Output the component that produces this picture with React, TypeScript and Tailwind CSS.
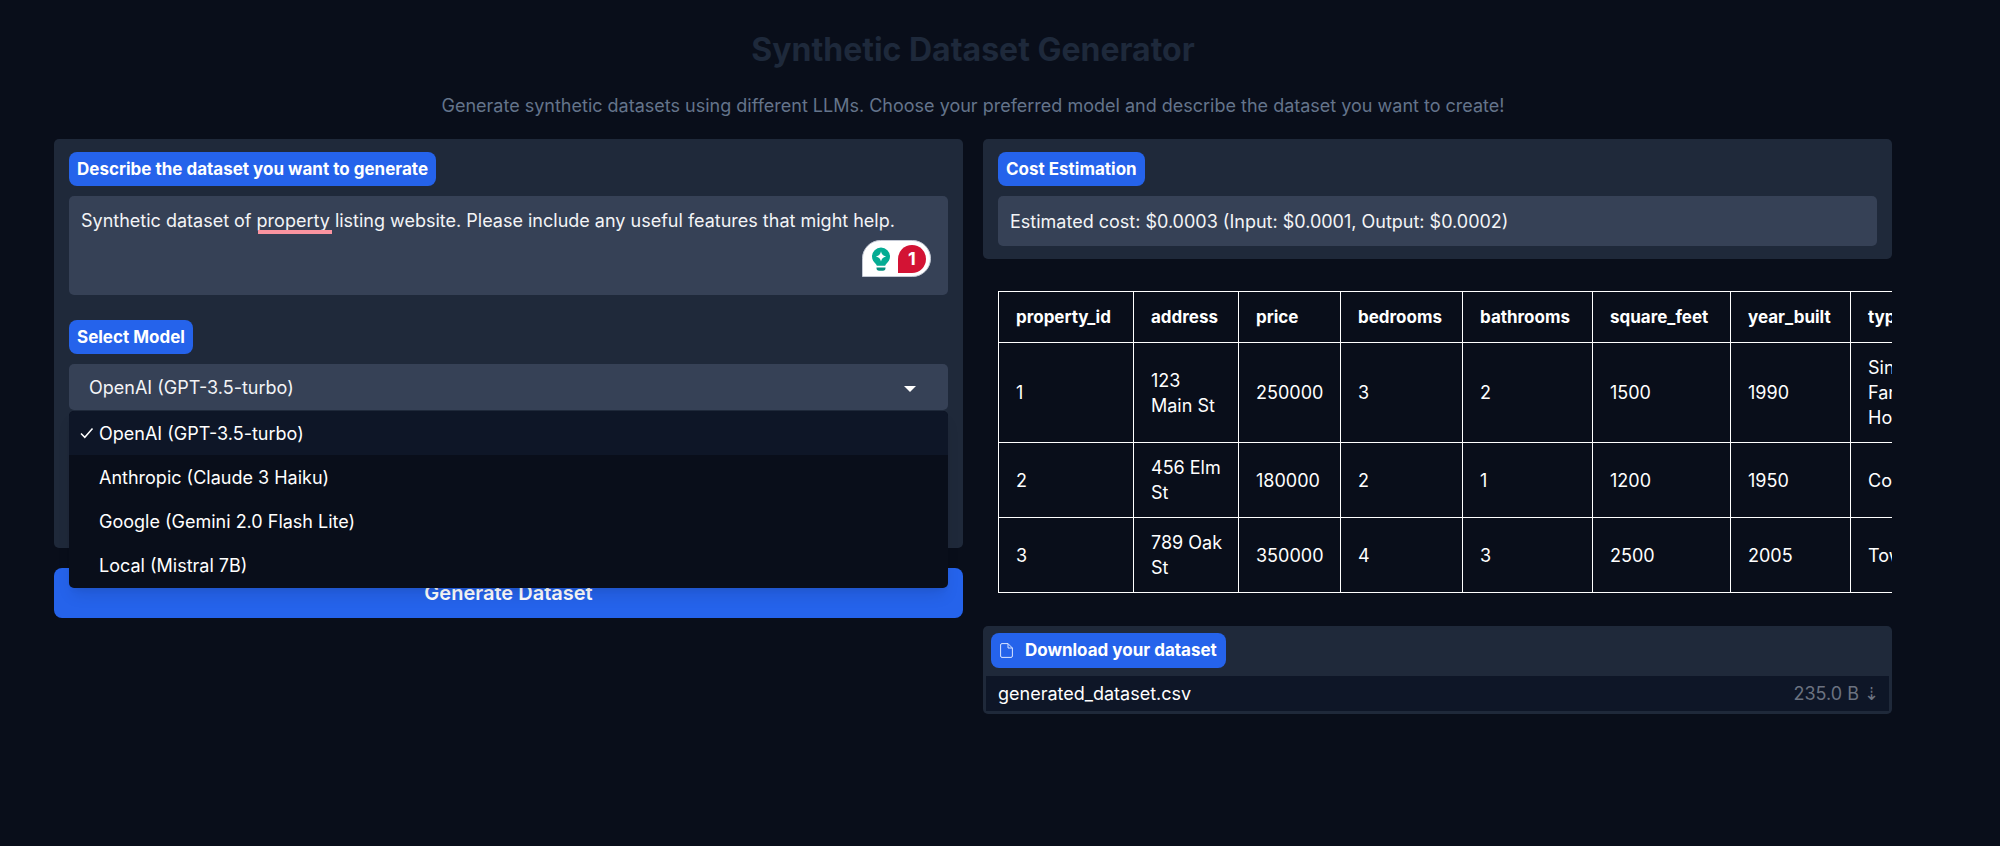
import { useState } from 'react'
import type { ReactNode } from 'react'

const models = [
  'OpenAI (GPT-3.5-turbo)',
  'Anthropic (Claude 3 Haiku)',
  'Google (Gemini 2.0 Flash Lite)',
  'Local (Mistral 7B)',
]

const columns = [
  { name: 'property_id', width: 'w-[135px]' },
  { name: 'address', width: 'w-[105px]' },
  { name: 'price', width: 'w-[102px]' },
  { name: 'bedrooms', width: 'w-[122px]' },
  { name: 'bathrooms', width: 'w-[130px]' },
  { name: 'square_feet', width: 'w-[138px]' },
  { name: 'year_built', width: 'w-[120px]' },
  { name: 'type', width: 'w-[116px]' },
]

const rows = [
  ['1', '123 Main St', '250000', '3', '2', '1500', '1990', 'Single Family Home'],
  ['2', '456 Elm St', '180000', '2', '1', '1200', '1950', 'Condo'],
  ['3', '789 Oak St', '350000', '4', '3', '2500', '2005', 'Townhouse'],
]

function Label({ htmlFor, children }: { htmlFor: string; children: ReactNode }) {
  return (
    <label
      htmlFor={htmlFor}
      className="inline-flex h-[34px] items-center self-start rounded-lg bg-[#2563eb] px-2 text-[17px] font-bold text-white"
    >
      {children}
    </label>
  )
}

function WritingAssistant() {
  return (
    <div className="absolute right-[17px] bottom-[18px] flex h-[37px] w-[69px] items-center justify-between rounded-t-full rounded-br-full border border-[#c3c8d4] bg-white pr-1 pl-2">
      <svg viewBox="0 0 20 26" className="h-[26px] w-5" aria-hidden="true">
        <path
          d="M10 1.5a9 9 0 0 1 9 9c0 3.3-1.8 5.400-3.600 7.200-.7.700-1 1.400-1.200 2.100H5.800c-.2-.7-.5-1.400-1.200-2.100C2.800 15.900 1 13.800 1 10.500a9 9 0 0 1 9-9z"
          fill="#04ac93"
        />
        <path d="M10 5.200c.6 3.200 1.900 4.500 5.100 5.200-3.200.7-4.500 2-5.100 5.200-.6-3.200-1.900-4.500-5.100-5.200 3.200-.7 4.500-2 5.100-5.200z" fill="#fff" />
        <path d="M5.500 21.500h9v.6a2.600 2.600 0 0 1-2.600 2.600H8.100a2.600 2.600 0 0 1-2.600-2.600z" fill="#04907f" />
      </svg>
      <span className="flex size-7 items-center justify-center rounded-t-full rounded-br-full bg-[#d31334] font-bold text-white">
        1
      </span>
    </div>
  )
}

export default function App() {
  const [model, setModel] = useState(models[0])
  const [prompt, setPrompt] = useState(
    'Synthetic dataset of property listing website. Please include any useful features that might help.',
  )

  return (
    <main className="min-h-screen bg-[#090e1a] pt-[29px] pr-[108px] pb-10 pl-[54px] font-['Inter',sans-serif] text-[18px] leading-[25px] text-[#f3f4f6]">
      <header className="text-center">
        <h1 className="text-[32px] leading-[42px] font-bold text-[#1e293b]">Synthetic Dataset Generator</h1>
        <p className="mt-[22px] text-[#64748b]">
          Generate synthetic datasets using different LLMs. Choose your preferred model and describe the dataset you want
          to create!
        </p>
      </header>

      <div className="mt-[21px] grid grid-cols-2 items-start gap-5">
        <section className="flex flex-col gap-5">
          <div className="flex flex-col rounded-[5px] bg-[#1f293a] px-[15px] pt-[13px] pb-[138px]">
            <Label htmlFor="prompt">Describe the dataset you want to generate</Label>
            <div className="relative mt-2.5">
              <textarea
                id="prompt"
                value={prompt}
                onChange={(e) => setPrompt(e.target.value)}
                spellCheck={false}
                className="block h-[99px] w-full resize-none rounded-[5px] bg-[#364156] px-3 py-3 outline-none"
              />
              <span className="absolute top-[34px] left-[189px] h-1 w-[74px] bg-[#fb94a0]" />
              <WritingAssistant />
            </div>

            <div className="mt-[25px] flex flex-col">
              <Label htmlFor="model">Select Model</Label>
            </div>
            <div className="relative mt-2.5">
              <select
                id="model"
                value={model}
                onChange={(e) => setModel(e.target.value)}
                className="block h-[46px] w-full appearance-none rounded-[5px] bg-[#364156] px-5 outline-none"
              >
                {models.map((m) => (
                  <option key={m}>{m}</option>
                ))}
              </select>
              <svg
                viewBox="0 0 12 6"
                className="pointer-events-none absolute top-[22px] right-8 h-1.5 w-3"
                aria-hidden="true"
              >
                <path d="M0 0h12L6 6z" fill="#fff" />
              </svg>
              <ul
                role="listbox"
                aria-label="Models"
                className="absolute inset-x-0 top-[47px] z-10 overflow-hidden rounded-[5px] bg-[#090e1a] pb-px text-white shadow-lg"
              >
                {models.map((m) => (
                  <li
                    key={m}
                    role="option"
                    aria-selected={m === model}
                    onClick={() => setModel(m)}
                    className={`flex h-11 cursor-pointer items-center pl-[11px] ${m === model ? 'bg-[#0e1627]' : ''}`}
                  >
                    <span className="flex w-[19px] shrink-0">
                      {m === model && (
                        <svg viewBox="0 0 14 12" className="h-3 w-3.5" aria-hidden="true">
                          <path d="M1 6.500l3.800 3.800L12.500 1.500" fill="none" stroke="#fff" strokeWidth="1.500" />
                        </svg>
                      )}
                    </span>
                    {m}
                  </li>
                ))}
              </ul>
            </div>
          </div>
          <button
            type="button"
            className="h-[50px] rounded-lg bg-[#2563eb] text-xl font-semibold text-white"
          >
            Generate Dataset
          </button>
        </section>

        <section className="flex min-w-0 flex-col">
          <div className="flex flex-col rounded-[5px] bg-[#1f293a] px-[15px] py-[13px]">
            <Label htmlFor="cost">Cost Estimation</Label>
            <input
              id="cost"
              readOnly
              value="Estimated cost: $0.0003 (Input: $0.0001, Output: $0.0002)"
              className="mt-2.5 h-[50px] w-full rounded-[5px] bg-[#364156] px-3 outline-none"
            />
          </div>

          <div className="mt-8 overflow-hidden pl-[15px]">
            <table className="w-[968px] table-fixed border-collapse text-left text-white">
              <thead>
                <tr>
                  {columns.map((c) => (
                    <th
                      key={c.name}
                      className={`border border-white pt-[13px] pr-3.5 pb-3 pl-[17px] text-[17px] font-bold ${c.width}`}
                    >
                      {c.name}
                    </th>
                  ))}
                </tr>
              </thead>
              <tbody>
                {rows.map((r) => (
                  <tr key={r[0]}>
                    {r.map((cell, i) => (
                      <td key={columns[i].name} className="border border-white py-3 pr-3.5 pl-[17px]">
                        {cell}
                      </td>
                    ))}
                  </tr>
                ))}
              </tbody>
            </table>
          </div>

          <div className="mt-[33px] rounded-[5px] bg-[#1f293a] px-[3px] pt-[7px] pb-[3px]">
            <div className="ml-[5px] inline-flex h-[35px] items-center gap-3 rounded-lg bg-[#2563eb] px-[9px] align-top text-[17px] font-bold text-white">
              <svg viewBox="0 0 13 15" className="h-[15px] w-[13px]" aria-hidden="true">
                <path
                  d="M8 .6H2A1.400 1.400 0 0 0 .6 2v11A1.400 1.400 0 0 0 2 14.400h9a1.400 1.400 0 0 0 1.400-1.400V5zM8 .6V5h4.400"
                  fill="none"
                  stroke="#dbe6ff"
                  strokeWidth="1"
                  strokeLinejoin="round"
                />
              </svg>
              Download your dataset
            </div>
            <div className="mt-2 flex h-[35px] items-center justify-between bg-[#0e1627] pr-2.5 pl-3 text-white">
              <span>generated_dataset.csv</span>
              <a href="#download" className="text-[#6b7280]">
                235.0 B ⇣
              </a>
            </div>
          </div>
        </section>
      </div>
    </main>
  )
}
